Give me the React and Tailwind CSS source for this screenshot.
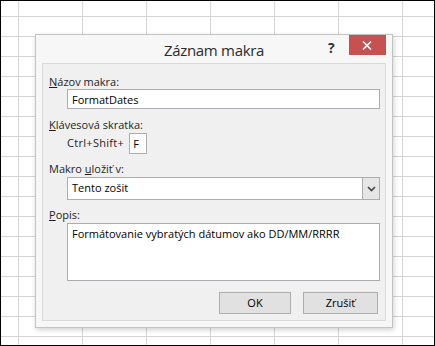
import { useState } from "react";

// Spreadsheet backdrop with the "Záznam makra" dialog on top
const font = { fontFamily: '"Open Sans", "Noto Sans", sans-serif' };

function Label({ children, className = "" }) {
  return (
    <div className={"h-[15px] leading-[15px] text-[11px] text-[#1e1e1e] " + className}>
      {children}
    </div>
  );
}

export default function App() {
  const [name, setName] = useState("FormatDates");
  const [key, setKey] = useState("F");
  const [desc, setDesc] = useState("Formátovanie vybratých dátumov ako DD/MM/RRRR");

  return (
    <div
      style={font}
      className="w-[435px] h-[346px] border border-black bg-white bg-[linear-gradient(to_right,#d4d4d4_1px,transparent_1px),linear-gradient(to_bottom,#d4d4d4_1px,transparent_1px)] bg-[size:64px_20px] bg-[position:17px_15px] pl-[34px] pt-[33px]"
    >
      <div className="w-[358px] h-[294px] bg-[#f7f7f7] border border-[#c3c3c3] shadow-[1px_2px_5px_rgba(0,0,0,0.18)] flex flex-col">
        {/* title bar */}
        <div className="h-[28px] flex items-start">
          <div className="w-[64px]" />
          <div className="flex-1 text-center text-[15px] tracking-[-0.3px] leading-[20px] pt-[5px] text-[#2b2b2b]">
            Záznam makra
          </div>
          <div className="w-[64px] flex items-start justify-end pr-[6px]">
            <span className="text-[14px] font-bold text-[#333] leading-[14px] mt-[6px] mr-[14px]">?</span>
            <button className="w-[45px] h-[20px] bg-[#c75050] flex items-center justify-center">
              <svg width="10" height="9" viewBox="0 0 10 9">
                <path d="M1 0.5L9 8.5M9 0.5L1 8.5" stroke="white" strokeWidth="1.6" />
              </svg>
            </button>
          </div>
        </div>

        {/* content panel */}
        <div className="mx-[6px] mb-[6px] flex-1 bg-[#f0f0f0] border border-[#d9d9d9] pt-[10px] pl-[6px] pr-[6px]">
          <Label>
            <span className="underline">N</span>ázov makra:
          </Label>
          <input
            value={name}
            onChange={(e) => setName(e.target.value)}
            className="block ml-[18px] w-[313px] h-[20px] border border-[#abadb3] bg-white px-[4px] text-[11px] text-black outline-none"
          />

          <Label className="mt-[8px]">
            <span className="underline">K</span>lávesová skratka:
          </Label>
          <div className="ml-[18px] mt-[1px] flex items-center gap-[5px] h-[21px]">
            <span className="text-[11px] tracking-[0.3px] text-[#1e1e1e]">Ctrl+Shift+</span>
            <input
              value={key}
              onChange={(e) => setKey(e.target.value)}
              className="block w-[18px] h-[21px] border border-[#abadb3] bg-white px-[3px] text-[11px] text-black outline-none"
            />
          </div>

          <Label className="mt-[7px]">
            Makro <span className="underline">u</span>ložiť v:
          </Label>
          <div className="ml-[18px] mt-[1px] w-[313px] h-[23px] border border-[#abadb3] bg-white flex items-center">
            <span className="flex-1 px-[4px] text-[11px] text-black">Tento zošit</span>
            <span className="w-[17px] h-[21px] bg-[#e6e6e6] border-l border-[#acacac] flex items-center justify-center">
              <svg width="9" height="6" viewBox="0 0 9 6">
                <path d="M1 1L4.5 4.5L8 1" stroke="#444" strokeWidth="1.6" fill="none" />
              </svg>
            </span>
          </div>

          <Label className="mt-[7px]">
            <span className="underline">P</span>opis:
          </Label>
          <textarea
            value={desc}
            onChange={(e) => setDesc(e.target.value)}
            className="block ml-[18px] mt-[1px] w-[313px] h-[58px] border border-[#abadb3] bg-white px-[4px] py-[2px] text-[11px] leading-[15px] text-black outline-none resize-none"
          />

          <div className="mt-[11px] flex justify-end gap-[12px] pr-[1px]">
            <button className="w-[72px] h-[22px] bg-[#e1e1e1] border border-[#adadad] text-[11px] text-black">
              OK
            </button>
            <button className="w-[75px] h-[22px] bg-[#e1e1e1] border border-[#adadad] text-[11px] text-black">
              Zrušiť
            </button>
          </div>
        </div>
      </div>
    </div>
  );
}
